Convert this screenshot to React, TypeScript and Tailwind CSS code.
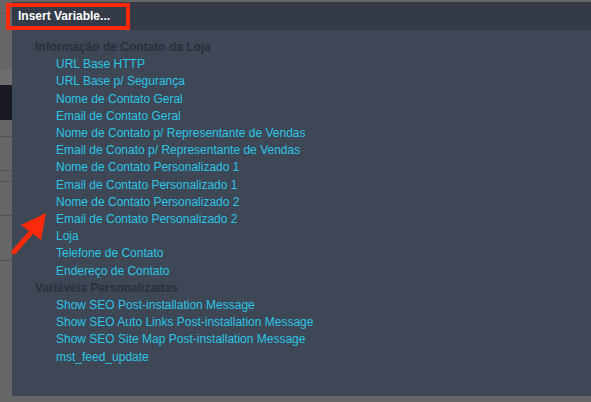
import React from "react";

const groups = [
  {
    title: "Informação de Contato da Loja",
    items: [
      "URL Base HTTP",
      "URL Base p/ Segurança",
      "Nome de Contato Geral",
      "Email de Contato Geral",
      "Nome de Contato p/ Representante de Vendas",
      "Email de Conato p/ Representante de Vendas",
      "Nome de Contato Personalizado 1",
      "Email de Contato Personalizado 1",
      "Nome de Contato Personalizado 2",
      "Email de Contato Personalizado 2",
      "Loja",
      "Telefone de Contato",
      "Endereço de Contato",
    ],
  },
  {
    title: "Variáveis Personalizadas",
    items: [
      "Show SEO Post-installation Message",
      "Show SEO Auto Links Post-installation Message",
      "Show SEO Site Map Post-installation Message",
      "mst_feed_update",
    ],
  },
];

export default function App() {
  return (
    <div
      className="relative w-[591px] h-[402px] bg-[#666666] flex overflow-hidden"
      style={{ fontFamily: '"Liberation Sans", Arial, sans-serif' }}
    >
      {/* left background strip */}
      <div className="w-[12px] flex flex-col">
        <div className="h-[13px]" />
        <div className="h-px bg-[#5a5a5a]" />
        <div className="h-[56px]" />
        <div className="h-[15px] bg-[#6e6e6e]" />
        <div className="h-[35px] bg-[#191a22]" />
        <div className="h-[16px]" />
        <div className="h-px bg-[#555555]" />
        <div className="h-[33px]" />
        <div className="h-px bg-[#555555]" />
        <div className="h-[10px]" />
        <div className="h-px bg-[#555555]" />
        <div className="h-[33px]" />
        <div className="h-px bg-[#555555]" />
        <div className="h-[44px]" />
        <div className="h-px bg-[#555555]" />
      </div>

      {/* main */}
      <div className="flex-1 flex flex-col pt-[2px] pb-[6px]">
        <div className="h-[28px] bg-[#343a48] flex items-center pl-[6px]">
          <span className="text-white font-bold text-[12px] leading-none">Insert Variable...</span>
        </div>
        <div className="flex-1 bg-[#3e4756] pt-[9px] pl-[23px]">
          {groups.map((g) => (
            <div key={g.title}>
              <div className="text-[#2b3039] font-bold text-[12px] leading-[17.2px]">{g.title}</div>
              {g.items.map((it) => (
                <div key={it} className="pl-[21px] text-[#2bc5e5] text-[12px] leading-[17.2px]">
                  {it}
                </div>
              ))}
            </div>
          ))}
        </div>
      </div>

      {/* red highlight box */}
      <div className="absolute left-[6px] top-[3px] w-[124px] h-[27px] border-[4px] border-[#fc2a0b]" />

      {/* red arrow */}
      <svg className="absolute left-0 top-0" width="591" height="402" viewBox="0 0 591 402">
        <line x1="14" y1="252" x2="33" y2="230" stroke="#fc2a0b" strokeWidth="5" strokeLinecap="round" />
        <polygon points="46,213 21,225 41,240" fill="#fc2a0b" />
      </svg>
    </div>
  );
}
